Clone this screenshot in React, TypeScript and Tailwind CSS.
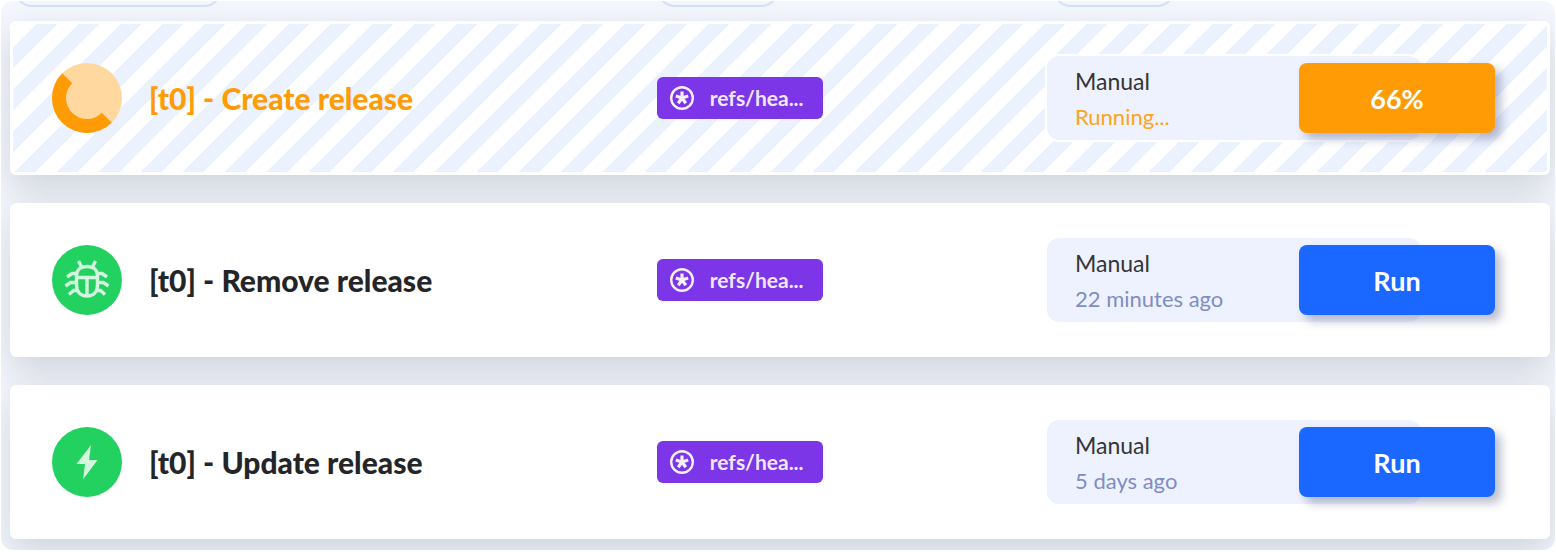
import React from "react";

type Status = "running" | "remove" | "update";

interface Pipeline {
  name: string;
  status: Status;
  trigger: string;
  time: string;
  action: string;
}

const pipelines: Pipeline[] = [
  { name: "[t0] - Create release", status: "running", trigger: "Manual", time: "Running...", action: "66%" },
  { name: "[t0] - Remove release", status: "remove", trigger: "Manual", time: "22 minutes ago", action: "Run" },
  { name: "[t0] - Update release", status: "update", trigger: "Manual", time: "5 days ago", action: "Run" },
];

function StatusIcon({ status }: { status: Status }) {
  return (
    <svg viewBox="0 0 70 70" className="size-[70px] shrink-0" aria-hidden="true">
      {status === "running" ? (
        <>
          <circle cx="35" cy="35" r="35" fill="#ffd89f" />
          <path d="M10.251 10.251A35 35 0 0 0 59.749 59.749L49.850 49.850A21 21 0 0 1 20.150 20.150Z" fill="#ff9c05" />
        </>
      ) : (
        <circle cx="35" cy="35" r="35" fill="#22d160" />
      )}
      {status === "remove" && (
        <g fill="none" stroke="#d3f6df" strokeWidth="3.4">
          <path d="M35 21.500C28.500 21.500 24.500 25 24.500 30.500V40C24.500 47 28.500 51 35 51S45.500 47 45.500 40V30.500C45.500 25 41.500 21.500 35 21.500Z" />
          <path d="M24 32.500H46M35 32.500V51M26.500 16L29.500 22M43.500 16L40.500 22" />
          <path d="M24 28.500H20L15 32M24 37.500H18.500L13.500 41M25 45.500H21.500L17 49.500" />
          <path d="M46 28.500H50L55 32M46 37.500H51.500L56.500 41M45 45.500H48.500L53 49.500" />
        </g>
      )}
      {status === "update" && <path d="M39 18L24.500 37H33L31 52.500L45.500 33H37Z" fill="#d3f6df" />}
    </svg>
  );
}

function RefBadge() {
  return (
    <span className="inline-flex h-[42px] w-[166px] items-center gap-4 rounded-md bg-[#7d35e8] pl-[13px] text-[21px] font-bold text-[#f1e8ff]">
      <svg viewBox="0 0 24 24" className="size-6 shrink-0" fill="none" stroke="#f6f0ff" aria-hidden="true">
        <circle cx="12" cy="12" r="10.8" strokeWidth="2.4" />
        <path d="M12 12V5.500M12 12L5.800 10M12 12L18.200 10M12 12L8.200 17.300M12 12L15.800 17.300" strokeWidth="3.2" />
      </svg>
      refs/hea...
    </span>
  );
}

function PipelineRow({ pipeline }: { pipeline: Pipeline }) {
  const running = pipeline.status === "running";
  return (
    <li
      className={`grid h-[154px] grid-cols-[606fr_391fr_446fr] items-center rounded-md border-[3px] border-white pr-[52px] pl-[39px] shadow-[0_14px_36px_rgba(60,70,85,0.2)] ${
        running
          ? "bg-[linear-gradient(135deg,#ecf1fe_25%,#ffffff_25%,#ffffff_50%,#ecf1fe_50%,#ecf1fe_75%,#ffffff_75%)] bg-size-[42px_42px] bg-position-[24px_0px] bg-clip-padding"
          : "bg-white"
      }`}
    >
      <div className="flex items-center gap-[27px]">
        <StatusIcon status={pipeline.status} />
        <h2
          className={`font-['Lato_Black','Lato',sans-serif] text-[30px] leading-9 font-black ${
            running ? "text-[#ff9c05]" : "text-[#242528]"
          }`}
        >
          {pipeline.name}
        </h2>
      </div>
      <div>
        <RefBadge />
      </div>
      <div className="flex items-center">
        <div className={`w-[374px] rounded-xl bg-[#eef2ff] pt-2 pb-1.5 pl-7 leading-[35px] ${running ? "ring-2 ring-white" : ""}`}>
          <p className="text-[23px] text-[#343537]">{pipeline.trigger}</p>
          <p className={`text-[22px] ${running ? "text-[#ffa31a]" : "text-[#7f8dc4]"}`}>{pipeline.time}</p>
        </div>
        <button
          type="button"
          className={`relative -ml-[122px] h-[70px] w-[196px] rounded-lg pt-0.5 text-[27px] font-bold text-white shadow-[6px_6px_10px_rgba(60,70,120,0.35)] ${
            running ? "bg-[#ff9c05]" : "bg-[#1a68ff]"
          }`}
        >
          {pipeline.action}
        </button>
      </div>
    </li>
  );
}

export default function App() {
  return (
    <main className="bg-white p-px font-['Lato',sans-serif]">
      <section className="overflow-hidden rounded-xl bg-[#f4f7fd] pr-[5px] pb-[11px] pl-[9px]">
        <div className="mb-[14px] -mt-[34px] grid grid-cols-[645fr_397fr_498fr] pl-1">
          <div className="h-10 w-[208px] rounded-[18px] border-2 border-[#d3e2fb]" />
          <div className="h-10 w-[122px] rounded-[18px] border-2 border-[#d3e2fb]" />
          <div className="h-10 w-[122px] rounded-[18px] border-2 border-[#d3e2fb]" />
        </div>
        <ul className="flex flex-col gap-7">
          {pipelines.map((pipeline) => (
            <PipelineRow key={pipeline.name} pipeline={pipeline} />
          ))}
        </ul>
      </section>
    </main>
  );
}
